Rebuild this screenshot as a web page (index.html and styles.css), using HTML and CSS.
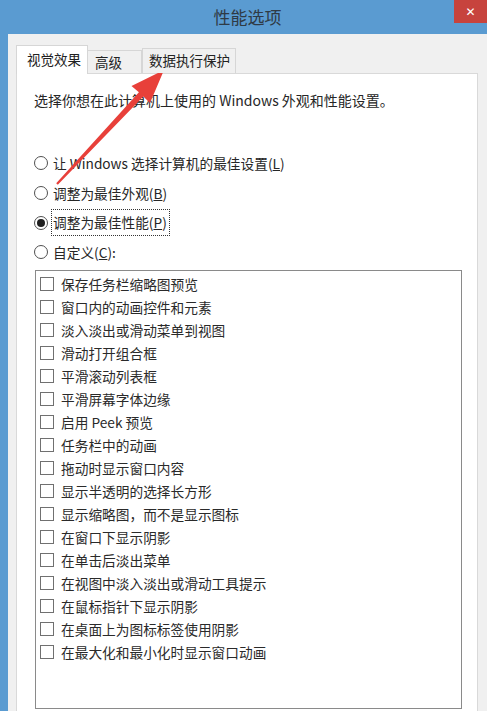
FILE: index.html
```html
<!DOCTYPE html>
<html lang="zh-CN">
<head>
    <meta charset="UTF-8">
    <title>性能选项</title>
    <link rel="stylesheet" href="styles.css">
</head>
<body>
    <div class="window">
        <div class="titlebar">
            <span></span>
            <span class="title">性能选项</span>
            <button class="close">&#x2715;</button>
        </div>

        <div class="dialog">
            <div class="tabs">
                <div class="tab active">视觉效果</div>
                <div class="tab">高级</div>
                <div class="tab">数据执行保护</div>
            </div>

            <div class="panel">
                <p class="intro">选择你想在此计算机上使用的 Windows 外观和性能设置。</p>

                <div class="radios">
                    <label class="radio"><span class="dot"></span><span>让 Windows 选择计算机的最佳设置(<u>L</u>)</span></label>
                    <label class="radio"><span class="dot"></span><span>调整为最佳外观(<u>B</u>)</span></label>
                    <label class="radio"><span class="dot checked"></span><span class="focus">调整为最佳性能(<u>P</u>)</span></label>
                    <label class="radio"><span class="dot"></span><span>自定义(<u>C</u>):</span></label>
                </div>

                <ul class="options">
                    <li><span class="box"></span>保存任务栏缩略图预览</li>
                    <li><span class="box"></span>窗口内的动画控件和元素</li>
                    <li><span class="box"></span>淡入淡出或滑动菜单到视图</li>
                    <li><span class="box"></span>滑动打开组合框</li>
                    <li><span class="box"></span>平滑滚动列表框</li>
                    <li><span class="box"></span>平滑屏幕字体边缘</li>
                    <li><span class="box"></span>启用 Peek 预览</li>
                    <li><span class="box"></span>任务栏中的动画</li>
                    <li><span class="box"></span>拖动时显示窗口内容</li>
                    <li><span class="box"></span>显示半透明的选择长方形</li>
                    <li><span class="box"></span>显示缩略图，而不是显示图标</li>
                    <li><span class="box"></span>在窗口下显示阴影</li>
                    <li><span class="box"></span>在单击后淡出菜单</li>
                    <li><span class="box"></span>在视图中淡入淡出或滑动工具提示</li>
                    <li><span class="box"></span>在鼠标指针下显示阴影</li>
                    <li><span class="box"></span>在桌面上为图标标签使用阴影</li>
                    <li><span class="box"></span>在最大化和最小化时显示窗口动画</li>
                </ul>
            </div>
        </div>

        <!-- red annotation arrow pointing at the DEP tab -->
        <svg class="arrow" width="487" height="711" viewBox="0 0 487 711">
            <polygon fill="#e8403a" points="164,70 150,103 143.3,96.4 57.8,184.8 56.2,183.2 138.9,92.2 131.5,86"/>
        </svg>
    </div>
</body>
</html>
```

FILE: styles.css
```css
* {
    box-sizing: border-box;
}

body {
    margin: 0;
    font-family: "Noto Sans CJK SC", "Noto Sans", sans-serif;
    color: #222;
    overflow: hidden;
}

.window {
    position: relative;
    width: 487px;
    height: 711px;
    background: #5a9bd1;
    padding-left: 8px;
    overflow: hidden;
}

.titlebar {
    height: 34px;
    display: grid;
    grid-template-columns: 1fr auto 1fr;
}

.title {
    align-self: center;
    font-size: 17px;
    color: #2f3a45;
    padding-bottom: 2px;
}

.close {
    justify-self: end;
    align-self: start;
    width: 33px;
    height: 23px;
    border: none;
    padding: 0;
    background: #c7433d;
    color: #fff;
    font-size: 12px;
    font-weight: bold;
    font-family: "DejaVu Sans", sans-serif;
}

.dialog {
    height: 677px;
    background: #f0f0f0;
    padding: 11px 0 0 8px;
}

.tabs {
    display: flex;
    align-items: flex-end;
    height: 29px;
    position: relative;
    z-index: 1;
}

.tab {
    height: 24px;
    margin-bottom: 1px;
    padding: 0 0 0 7px;
    font-size: 13.5px;
    line-height: 22px;
    background: #f0f0f0;
    border: 1px solid #d6d6d6;
    border-bottom: none;
    color: #222;
}

.tab + .tab {
    border-left: none;
}

.tab:nth-child(2) {
    width: 54px;
    height: 23px;
}

.tab:nth-child(3) {
    width: 94px;
    padding-left: 6px;
    border-left: 1px solid #d6d6d6;
    height: 25px;
}

.tab.active {
    height: 29px;
    margin-bottom: 0;
    width: 72px;
    padding: 0 0 0 10px;
    line-height: 26px;
    background: #fff;
    border-color: #d6d6d6;
}

.panel {
    width: 462px;
    height: 650px;
    margin-top: -1px;
    background: #fff;
    border: 1px solid #d9d9d9;
    padding: 17px 0 0 17px;
}

.intro {
    margin: 0;
    font-size: 14px;
    line-height: 18px;
    color: #262626;
}

.radios {
    margin-top: 39px;
    display: flex;
    flex-direction: column;
}

.radio {
    height: 30px;
    display: flex;
    align-items: center;
    gap: 5px;
    font-size: 13.7px;
    color: #262626;
}

.radio:nth-child(3) {
    height: 29px;
}

.dot {
    width: 14px;
    height: 14px;
    border: 1px solid #505050;
    border-radius: 50%;
    display: flex;
    align-items: center;
    justify-content: center;
}

.dot.checked::after {
    content: "";
    width: 8px;
    height: 8px;
    border-radius: 50%;
    background: #1e1e1e;
}

.focus {
    outline: 1px dotted #333;
    outline-offset: 1px;
    padding: 1px 1px 2px 0;
}

.options {
    list-style: none;
    margin: 3px 0 0 1px;
    padding: 1px 0 0 4px;
    width: 427px;
    height: 439px;
    border: 1px solid #8a8a8a;
}

.options li {
    height: 23px;
    display: flex;
    align-items: center;
    gap: 7px;
    font-size: 13.7px;
    color: #2a2a2a;
}

.box {
    width: 14px;
    height: 14px;
    border: 1px solid #707070;
    flex-shrink: 0;
}

.arrow {
    position: absolute;
    left: 0;
    top: 0;
    pointer-events: none;
}
```
